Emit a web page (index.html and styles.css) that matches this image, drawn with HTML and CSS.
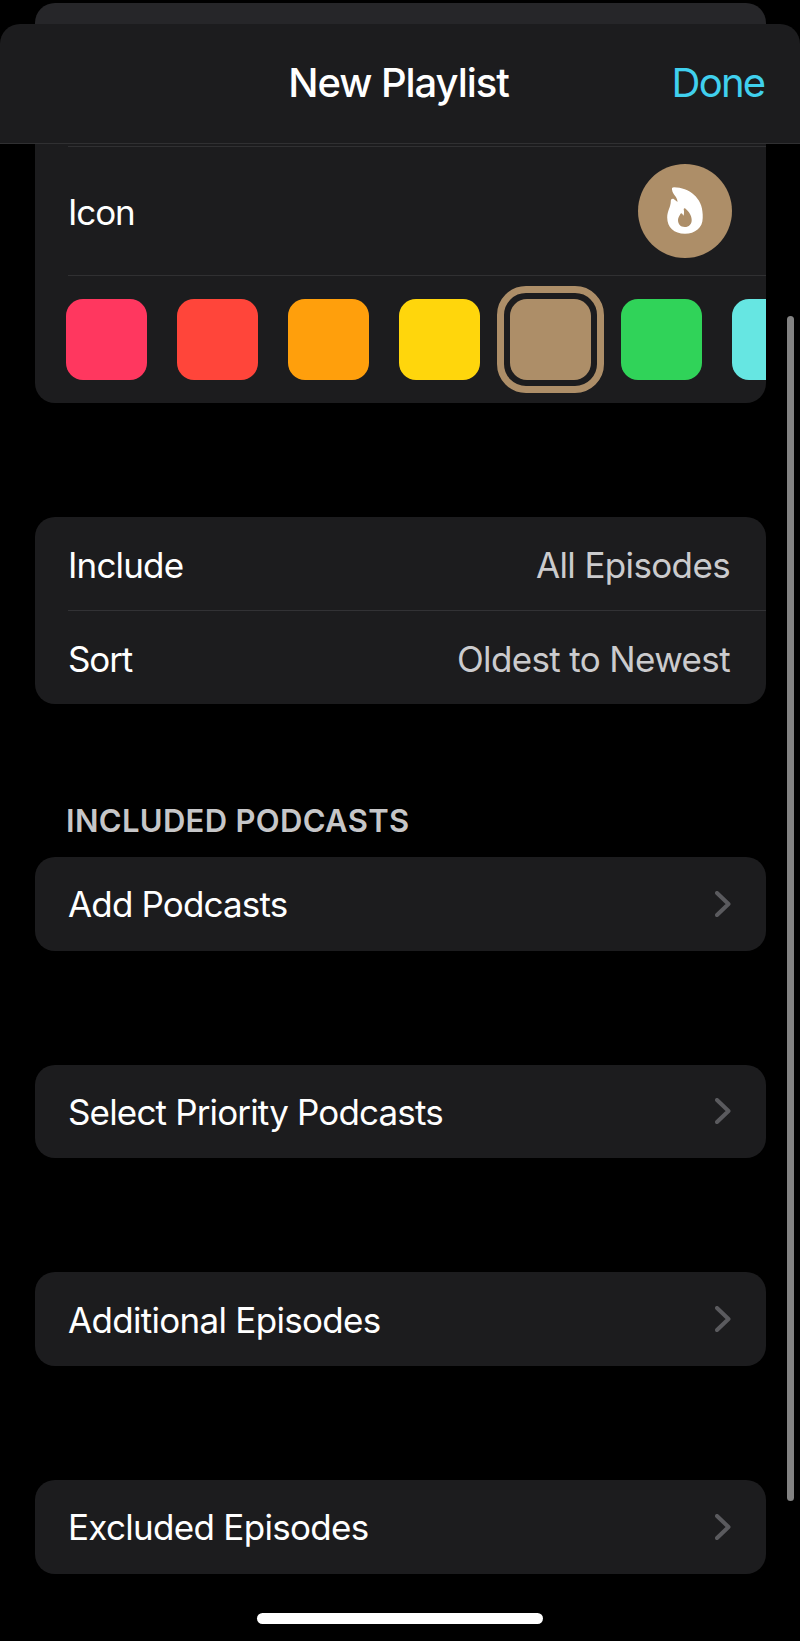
FILE: index.html
```html
<!DOCTYPE html>
<html lang="en">
<head>
<meta charset="utf-8">
<title>New Playlist</title>
<link rel="stylesheet" href="styles.css">
</head>
<body>
<div class="screen">
  <div class="sheet-behind"></div>
  <header class="navbar">
    <h1 class="title">New Playlist</h1>
    <a class="done">Done</a>
  </header>
  <main class="content">
    <section class="card appearance">
      <div class="row icon-row">
        <span class="label short">Icon</span>
        <span class="icon-badge">
          <svg class="flame" viewBox="0 0 36 47" width="36" height="47">
            <path fill="#fff" d="M5 2.5C4.7 1 5.500 .3 7 .3C22 .5 35.700 11 35.700 27.500V31C35.700 41 28 46.700 18 46.700C7 46.700 .2 40.500 .2 30.500C.2 24 3.800 20 3.800 14C3.800 12 5.600 11.200 7 12.200C8.500 13.200 9.600 14 10.500 15C10.500 9.500 5.700 8 5 2.500Z"/>
            <path fill="#ad8e68" d="M16.700 22.200C16.700 21.400 17.600 21 18.300 21.500C22 24.500 24.700 28.500 24.700 33C24.700 37.300 22 40 17.800 40C13.500 40 11 37.200 11 33C11 30.500 12.500 28.500 13.500 26.700C14 25.900 14.800 26 15.200 26.700L16.500 28.700C17.200 26.500 17.200 24.500 16.700 22.200Z"/>
          </svg>
        </span>
      </div>
      <div class="swatches">
        <span class="swatch pink"></span>
        <span class="swatch red"></span>
        <span class="swatch orange"></span>
        <span class="swatch yellow"></span>
        <span class="swatch tan selected"></span>
        <span class="swatch green"></span>
        <span class="swatch aqua"></span>
      </div>
    </section>

    <section class="card options">
      <div class="row"><span class="label">Include</span><span class="value">All Episodes</span></div>
      <div class="row"><span class="label short">Sort</span><span class="value">Oldest to Newest</span></div>
    </section>

    <h2 class="section-title">INCLUDED PODCASTS</h2>
    <div class="links">
      <section class="card"><div class="row"><span class="label">Add Podcasts</span><svg class="chevron" viewBox="0 0 16 26" width="16" height="26"><path d="M2 2L13.500 13L2 24"/></svg></div></section>
      <section class="card"><div class="row"><span class="label">Select Priority Podcasts</span><svg class="chevron" viewBox="0 0 16 26" width="16" height="26"><path d="M2 2L13.500 13L2 24"/></svg></div></section>
      <section class="card"><div class="row"><span class="label wide">Additional Episodes</span><svg class="chevron" viewBox="0 0 16 26" width="16" height="26"><path d="M2 2L13.500 13L2 24"/></svg></div></section>
      <section class="card"><div class="row"><span class="label wide">Excluded Episodes</span><svg class="chevron" viewBox="0 0 16 26" width="16" height="26"><path d="M2 2L13.500 13L2 24"/></svg></div></section>
    </div>
  </main>
  <div class="scrollbar"></div>
  <div class="home-indicator"></div>
</div>
</body>
</html>
```
FILE: styles.css
```css
* { box-sizing: border-box; }
body {
  margin: 0;
  background: #000;
  font-family: Inter, "Liberation Sans", sans-serif;
  color: #fff;
}
.screen {
  position: relative;
  width: 800px;
  height: 1641px;
  overflow: hidden;
  padding-top: 3px;
}
.sheet-behind {
  height: 21px;
  margin: 0 34.500px;
  border-radius: 20px 20px 0 0;
  background: #262629;
}
.navbar {
  display: grid;
  grid-template-columns: 1fr auto 1fr;
  align-items: center;
  height: 120px;
  padding: 0 35.500px 1px;
  border-bottom: 1px solid #303032;
  border-radius: 20px 20px 0 0;
  background: #1c1c1e;
}
.title {
  grid-column: 2;
  margin: 0 3px 0 0;
  font-size: 40px;
  font-weight: 500;
  line-height: 48px;
  letter-spacing: -1.050px;
}
.done {
  justify-self: end;
  font-size: 40px;
  line-height: 48px;
  letter-spacing: -1.700px;
  color: #40d0ee;
}
.content { padding: 0 34.500px; }
.card {
  border-radius: 20px;
  background: #1c1c1e;
  overflow: hidden;
}
.appearance {
  height: 259px;
  padding-top: 2px;
  border-radius: 0 0 20px 20px;
}
.row {
  display: flex;
  align-items: center;
  justify-content: space-between;
  height: 93.500px;
  margin-left: 33.500px;
  padding-right: 34.500px;
}
.row + .row { border-top: 1px solid #323235; }
.label, .value {
  font-size: 35px;
  line-height: 42px;
  letter-spacing: -0.840px;
  padding-top: 1px;
}
.label.short { letter-spacing: -1.100px; }
.label.wide { letter-spacing: -0.700px; }
.value {
  letter-spacing: -0.640px;
  padding-right: 1px;
  color: #cbcbcd;
}
.options .label, .options .value { padding-top: 2px; }
.options .row:first-child { height: 93px; }
.options .row:last-child { height: 94px; }
.icon-row {
  height: 129.500px;
  padding-right: 34px;
  border-top: 1px solid #303032;
  border-bottom: 1px solid #303032;
}
.icon-row .label { padding-top: 2px; }
.icon-badge {
  display: flex;
  align-items: center;
  justify-content: center;
  width: 94px;
  height: 94px;
  border-radius: 50%;
  background: #ad8e68;
}
.swatches {
  display: flex;
  gap: 30px;
  padding: 23px 0 0 31.500px;
}
.swatch {
  position: relative;
  flex: none;
  width: 81px;
  height: 81px;
  border-radius: 17px;
}
.pink { background: #ff375f; }
.red { background: #ff453a; }
.orange { background: #ff9f0c; }
.yellow { background: #ffd60c; }
.tan { background: #ad8e68; }
.green { background: #30d359; }
.aqua { background: #66e6e2; }
.selected::after {
  content: "";
  position: absolute;
  inset: -13px;
  border: 7px solid #ad8e68;
  border-radius: 29px;
}
.options { margin-top: 114px; }
.section-title {
  margin: 96px 0 0 31.500px;
  height: 57px;
  padding-top: 2px;
  font-size: 31px;
  font-weight: 600;
  line-height: 38px;
  letter-spacing: 0.320px;
  color: #c6c6c8;
  white-space: nowrap;
}
.links {
  display: grid;
  gap: 114.200px;
}
.chevron {
  fill: none;
  stroke: #5a5a5e;
  stroke-width: 4;
  stroke-linecap: round;
  stroke-linejoin: round;
}
.scrollbar {
  position: absolute;
  top: 315.500px;
  left: 787px;
  width: 7px;
  height: 1185.500px;
  border-radius: 4px;
  background: #828282;
}
.home-indicator {
  position: absolute;
  top: 1613px;
  left: 257px;
  width: 286px;
  height: 11px;
  border-radius: 6px;
  background: #fff;
}
```
